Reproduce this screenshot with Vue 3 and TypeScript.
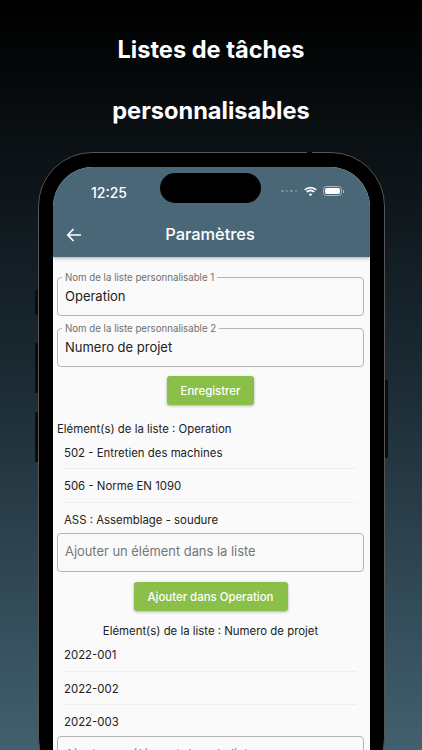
<script setup lang="ts">
const firstItems: string[] = ['502 - Entretien des machines', '506 - Norme EN 1090', 'ASS : Assemblage - soudure']
const secondItems: string[] = ['2022-001', '2022-002', '2022-003']
</script>

<template>
  <div class="page">
    <header class="headline">
      <div>Listes de tâches</div>
      <div>personnalisables</div>
    </header>
    <div class="phone">
      <span class="notch"></span>
      <span class="side side-a"></span>
      <span class="side side-b"></span>
      <span class="side side-c"></span>
      <span class="side side-d"></span>
      <div class="screen">
        <div class="appbar">
          <div class="status">
            <span class="time">12:25</span>
            <span class="island"></span>
            <div class="status-icons">
              <span class="dots"><i></i><i></i><i></i><i></i></span>
              <svg class="wifi" width="15" height="11" viewBox="0 0 15 11">
                <path d="M7.5 2.6c2 0 3.8.8 5.1 2l1.2-1.3A9.2 9.2 0 0 0 7.5.8a9.2 9.2 0 0 0-6.3 2.5l1.2 1.3a7.4 7.4 0 0 1 5.1-2z" fill="#fff" />
                <path d="M7.5 5.4c1.2 0 2.3.5 3.1 1.2l1.2-1.3a6.300 6.300 0 0 0-8.600 0l1.200 1.300c.8-.7 1.900-1.200 3.100-1.200z" fill="#fff" />
                <path d="M7.500 7.600c-.7 0-1.300.3-1.700.7l1.700 1.900 1.700-1.900c-.4-.4-1-.7-1.700-.7z" fill="#fff" />
              </svg>
              <span class="battery"><b></b></span>
            </div>
          </div>
          <div class="toolbar">
            <svg class="back" width="16" height="14" viewBox="0 0 16 14">
              <path d="M15 7H2M7.500 1 1.800 7l5.700 6" fill="none" stroke="#fff" stroke-width="1.700" />
            </svg>
            <span class="title">Paramètres</span>
          </div>
        </div>
        <main class="content">
          <div class="field labelled">
            <label>Nom de la liste personnalisable 1</label>
            <span>Operation</span>
          </div>
          <div class="field labelled second">
            <label>Nom de la liste personnalisable 2</label>
            <span>Numero de projet</span>
          </div>
          <button class="action save">Enregistrer</button>
          <p class="list-title">Elément(s) de la liste : Operation</p>
          <ul class="items">
            <li v-for="item in firstItems" :key="item">{{ item }}</li>
          </ul>
          <div class="field placeholder"><span>Ajouter un élément dans la liste</span></div>
          <button class="action add">Ajouter dans Operation</button>
          <p class="list-title centered">Elément(s) de la liste : Numero de projet</p>
          <ul class="items">
            <li v-for="item in secondItems" :key="item">{{ item }}</li>
          </ul>
          <div class="field placeholder last"><span>Ajouter un élément dans la liste</span></div>
        </main>
      </div>
    </div>
  </div>
</template>

<style>
html, body { margin: 0; background: #000; }
</style>

<style scoped>
.page {
  width: 422px;
  height: 750px;
  overflow: hidden;
  background: linear-gradient(180deg, #000 0%, #0b1115 20%, #1b2a33 50%, #42606f 100%);
  font-family: Inter, "Liberation Sans", sans-serif;
  color: #222;
}
.headline {
  height: 152px;
  padding-top: 19px;
  box-sizing: border-box;
  text-align: center;
  color: #fff;
  font-weight: 700;
  font-size: 23.600px;
  line-height: 61px;
}
.phone {
  position: relative;
  width: 347px;
  height: 640px;
  margin-left: 38px;
  box-sizing: border-box;
  padding: 14px 14px 0;
  background: #000;
  border: 1px solid #575454;
  border-radius: 54px;
}
.notch {
  position: absolute;
  left: 268px;
  top: -1px;
  width: 5px;
  height: 2px;
  background: #000;
}
.side {
  position: absolute;
  width: 3px;
  background: #0c0c0c;
  border-radius: 1px;
}
.side-a { left: -4px; top: 137px; height: 25px; }
.side-b { left: -4px; top: 190px; height: 50px; }
.side-c { left: -4px; top: 259px; height: 50px; }
.side-d { right: -4px; top: 227px; height: 78px; }
.screen {
  height: 100%;
  background: #fafafa;
  border-radius: 40px 40px 0 0;
  overflow: hidden;
}
.appbar {
  height: 90px;
  background: #4a6778;
  box-shadow: 0 1px 4px rgba(0, 0, 0, .35);
  position: relative;
  color: #fff;
}
.status {
  position: relative;
  height: 45px;
  display: flex;
  align-items: center;
  padding: 0 28px 0 38px;
  box-sizing: border-box;
}
.time {
  font-size: 14px;
  font-weight: 500;
  margin-top: 5px;
}
.island {
  position: absolute;
  left: 107px;
  top: 6px;
  width: 101px;
  height: 30px;
  background: #000;
  border-radius: 15px;
}
.status-icons {
  margin-left: auto;
  margin-top: 3px;
  display: flex;
  align-items: center;
  gap: 5px;
}
.dots { display: flex; gap: 2px; margin-right: 1px; margin-left: -1px; }
.dots i {
  display: block;
  width: 2.500px;
  height: 2.500px;
  border-radius: 50%;
  background: #7f95a2;
}
.battery {
  position: relative;
  display: block;
  width: 19px;
  height: 10px;
  border: 1px solid #a9b8c1;
  border-radius: 3.500px;
  box-sizing: border-box;
  padding: 1px;
}
.battery::after {
  content: "";
  position: absolute;
  right: -3px;
  top: 2.500px;
  width: 1.500px;
  height: 3px;
  background: #a9b8c1;
}
.battery b {
  display: block;
  height: 100%;
  background: #fff;
  border-radius: 2px;
}
.toolbar {
  position: relative;
  height: 45px;
  display: flex;
  align-items: center;
  justify-content: center;
}
.back {
  position: absolute;
  left: 13px;
  top: 16px;
}
.title {
  font-size: 16.400px;
  font-weight: 500;
  margin-top: -1px;
  margin-left: -3px;
}
.content {
  padding: 20px 6px 0 4px;
  display: flex;
  flex-direction: column;
  align-items: stretch;
}
.field {
  position: relative;
  height: 39px;
  box-sizing: border-box;
  border: 1px solid #b5b5b5;
  border-radius: 4px;
  display: flex;
  align-items: center;
  padding-left: 7px;
  font-size: 13px;
  flex: none;
}
.field.second { margin-top: 12px; }
.field label {
  position: absolute;
  left: 4px;
  top: -6px;
  padding: 0 3px;
  background: #fafafa;
  font-size: 9.700px;
  line-height: 11px;
  color: #6f6f6f;
}
.labelled span { margin-top: -1px; }
.placeholder { color: #777; font-size: 12.900px; }
.placeholder span { margin-top: -2px; }
.placeholder.last { margin-top: 1px; }
.action {
  align-self: center;
  flex: none;
  height: 29px;
  border: 0;
  border-radius: 3px;
  background: #8abf4a;
  color: #fff;
  font-family: inherit;
  font-size: 11.400px;
  font-weight: 500;
  box-shadow: 0 1px 3px rgba(0, 0, 0, .3);
  padding: 0;
}
.save { width: 87px; margin-top: 9px; }
.add { width: 154px; margin-top: 10px; }
.list-title {
  margin: 18px 0 0;
  font-size: 11.400px;
  line-height: 13px;
  color: #222;
}
.centered { text-align: center; margin-top: 14px; }
.items {
  list-style: none;
  margin: 0;
  padding: 0 7px;
  font-size: 11.400px;
  color: #222;
}
.items li {
  height: 33.400px;
  line-height: 34px;
  box-sizing: border-box;
  border-bottom: 1px solid #efefef;
}
.items li:last-child { height: 30.400px; border-bottom: 0; }
</style>
